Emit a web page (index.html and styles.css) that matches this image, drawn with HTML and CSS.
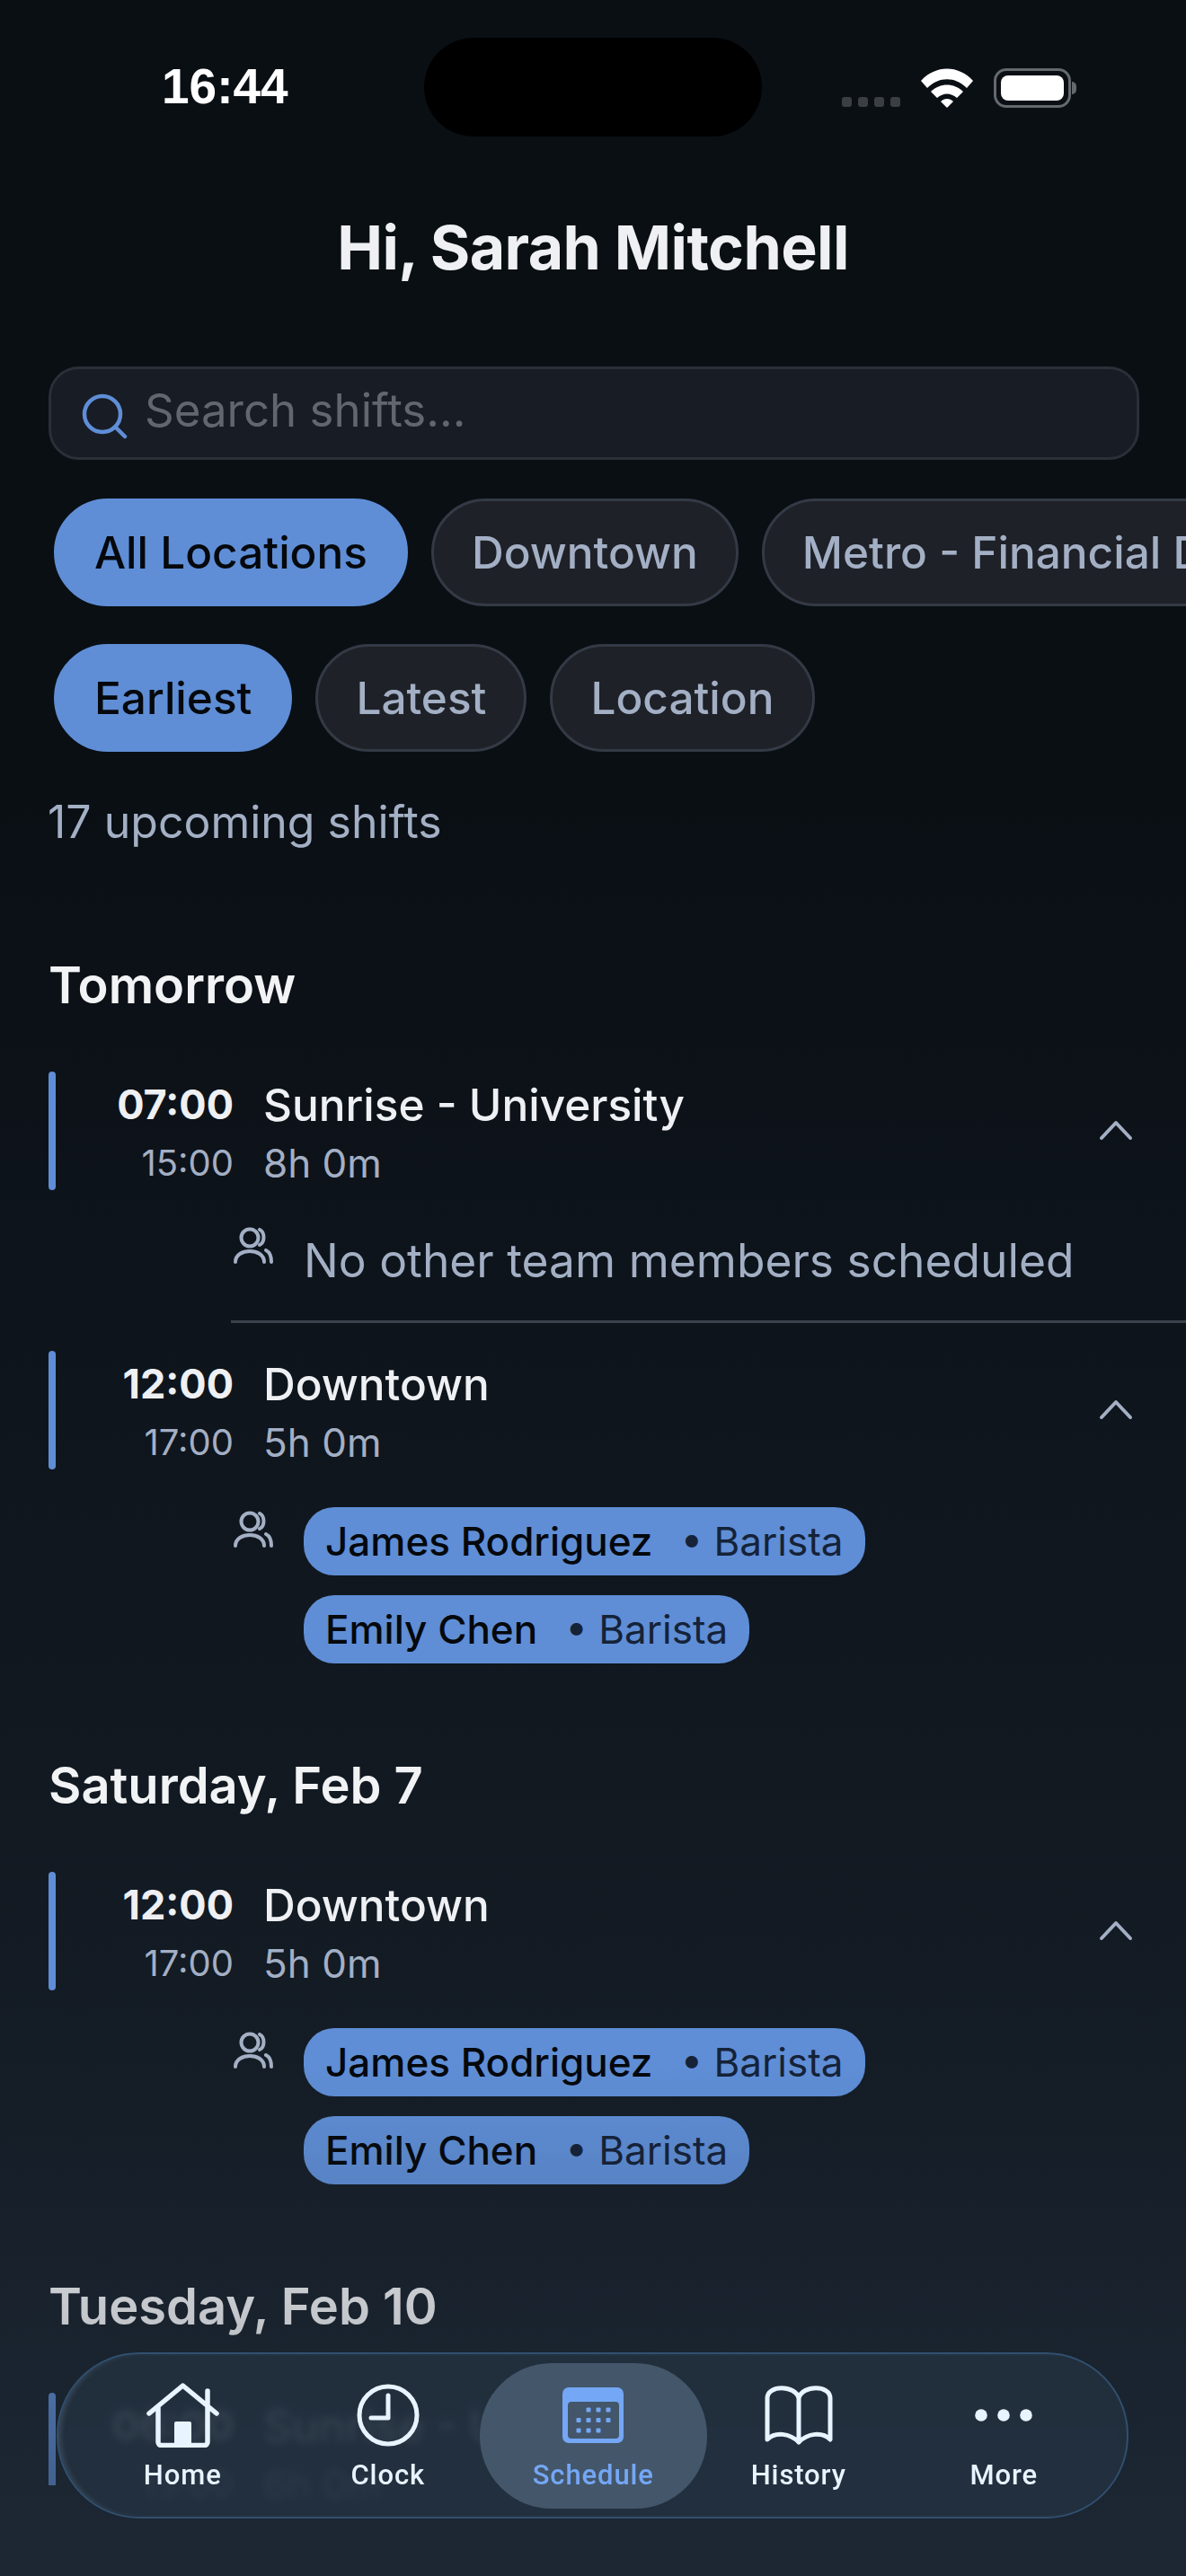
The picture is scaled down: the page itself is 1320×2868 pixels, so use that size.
FILE: index.html
```html
<!DOCTYPE html>
<html lang="en">
<head>
  <meta charset="UTF-8" />
  <meta name="viewport" content="width=device-width, initial-scale=1.0" />
  <title>Schedule</title>
  <link rel="stylesheet" href="styles.css">
</head>
<body>
  <div class="screen">
    <div class="status">
      <span class="clock">16:44</span>
      <div class="island"></div>
      <div class="status-icons">
        <div class="signal"><i></i><i></i><i></i><i></i></div>
        <svg class="wifi" width="58" height="44" viewBox="0 0 58 44">
          <path d="M0 14 C16 -4 42 -4 58 14 L51 22 C38 9 20 9 7 22 Z" fill="#fff"/>
          <path d="M11 26 C21 16 37 16 47 26 L40 33 C33 27 25 27 18 33 Z" fill="#fff"/>
          <path d="M22 37 C26 33 32 33 36 37 L29 44 Z" fill="#fff"/>
        </svg>
        <div class="battery"><div class="battery-fill"></div></div>
        <div class="battery-cap"></div>
      </div>
    </div>

    <h1 class="greeting">Hi, Sarah Mitchell</h1>

    <div class="search">
      <svg width="52" height="52" viewBox="0 0 52 52" fill="none" stroke="#5f8ed6" stroke-width="4.5" stroke-linecap="round">
        <circle cx="23" cy="24" r="20"/>
        <path d="M38 39 L48 49"/>
      </svg>
      <span>Search shifts...</span>
    </div>

    <div class="chips">
      <span class="chip chip-on">All Locations</span>
      <span class="chip">Downtown</span>
      <span class="chip">Metro - Financial District</span>
    </div>
    <div class="chips chips-sort">
      <span class="chip chip-on">Earliest</span>
      <span class="chip">Latest</span>
      <span class="chip">Location</span>
    </div>

    <p class="count">17 upcoming shifts</p>

    <h2 class="day day-first">Tomorrow</h2>

    <div class="shift">
      <div class="bar"></div>
      <div class="times"><b>07:00</b><span>15:00</span></div>
      <div class="info"><b>Sunrise - University</b><span>8h 0m</span></div>
      <svg class="chev" width="38" height="24" viewBox="0 0 38 24" fill="none" stroke="#a3afc4" stroke-width="4" stroke-linecap="round" stroke-linejoin="round"><path d="M3 21 L19 4 L35 21"/></svg>
    </div>
    <div class="team team-empty">
      <svg class="people" width="44" height="42" viewBox="0 0 44 42" fill="none" stroke="#a3afc4" stroke-width="4" stroke-linecap="round"><circle cx="18" cy="12" r="9.5"/><path d="M29 3 C35 6 35 17 29 20"/><path d="M2 39 C2 23 34 23 34 39"/><path d="M36 26 C40 28 42 33 42 39"/></svg>
      <span>No other team members scheduled</span>
    </div>
    <div class="divider"></div>

    <div class="shift">
      <div class="bar"></div>
      <div class="times"><b>12:00</b><span>17:00</span></div>
      <div class="info"><b>Downtown</b><span>5h 0m</span></div>
      <svg class="chev" width="38" height="24" viewBox="0 0 38 24" fill="none" stroke="#a3afc4" stroke-width="4" stroke-linecap="round" stroke-linejoin="round"><path d="M3 21 L19 4 L35 21"/></svg>
    </div>
    <div class="team">
      <svg class="people" width="44" height="42" viewBox="0 0 44 42" fill="none" stroke="#a3afc4" stroke-width="4" stroke-linecap="round"><circle cx="18" cy="12" r="9.5"/><path d="M29 3 C35 6 35 17 29 20"/><path d="M2 39 C2 23 34 23 34 39"/><path d="M36 26 C40 28 42 33 42 39"/></svg>
      <div class="pills">
        <div class="pill"><b>James Rodriguez</b><span>• Barista</span></div>
        <div class="pill"><b>Emily Chen</b><span>• Barista</span></div>
      </div>
    </div>

    <h2 class="day">Saturday, Feb 7</h2>

    <div class="shift">
      <div class="bar"></div>
      <div class="times"><b>12:00</b><span>17:00</span></div>
      <div class="info"><b>Downtown</b><span>5h 0m</span></div>
      <svg class="chev" width="38" height="24" viewBox="0 0 38 24" fill="none" stroke="#a3afc4" stroke-width="4" stroke-linecap="round" stroke-linejoin="round"><path d="M3 21 L19 4 L35 21"/></svg>
    </div>
    <div class="team">
      <svg class="people" width="44" height="42" viewBox="0 0 44 42" fill="none" stroke="#a3afc4" stroke-width="4" stroke-linecap="round"><circle cx="18" cy="12" r="9.5"/><path d="M29 3 C35 6 35 17 29 20"/><path d="M2 39 C2 23 34 23 34 39"/><path d="M36 26 C40 28 42 33 42 39"/></svg>
      <div class="pills">
        <div class="pill"><b>James Rodriguez</b><span>• Barista</span></div>
        <div class="pill"><b>Emily Chen</b><span>• Barista</span></div>
      </div>
    </div>

    <h2 class="day">Tuesday, Feb 10</h2>

    <div class="shift shift-cut">
      <div class="bar"></div>
      <div class="times"><b>06:00</b><span>13:00</span></div>
      <div class="info"><b>Sunrise - University</b><span>6h 0m</span></div>
    </div>

    <div class="fade"></div>

    <nav class="tabbar">
      <div class="tab">
        <div class="tab-icon">
          <svg width="81" height="72" viewBox="0 0 81 72"><path d="M3 34 L40.5 3 L78 34 M13 26 V66 A3.5 3.5 0 0 0 16.5 69.5 H64.5 A3.5 3.5 0 0 0 68 66 V9" fill="none" stroke="#e8f4ff" stroke-width="5.5" stroke-linecap="round" stroke-linejoin="round"/><rect x="31" y="43" width="19" height="27" rx="2" fill="#e8f4ff"/></svg>
        </div>
        <span>Home</span>
      </div>
      <div class="tab">
        <div class="tab-icon">
          <svg width="70" height="70" viewBox="0 0 70 70" fill="none" stroke="#e8f4ff" stroke-width="5" stroke-linecap="round" stroke-linejoin="round"><circle cx="35" cy="35" r="32"/><path d="M35 13 V38 H16"/></svg>
        </div>
        <span>Clock</span>
      </div>
      <div class="tab tab-on">
        <div class="tab-icon">
          <svg width="68" height="62" viewBox="0 0 68 62"><rect width="68" height="62" rx="7" fill="#74a7f5"/><rect x="6" y="16" width="57" height="41" rx="4" fill="#43566a"/><g fill="#74a7f5"><rect x="26.5" y="22.5" width="5" height="5" rx="1"/><rect x="37.5" y="22.5" width="5" height="5" rx="1"/><rect x="48.5" y="22.5" width="5" height="5" rx="1"/><rect x="15.5" y="34" width="5" height="5" rx="1"/><rect x="26.5" y="34" width="5" height="5" rx="1"/><rect x="37.5" y="34" width="5" height="5" rx="1"/><rect x="48.5" y="34" width="5" height="5" rx="1"/><rect x="15.5" y="45.5" width="5" height="5" rx="1"/><rect x="26.5" y="45.5" width="5" height="5" rx="1"/><rect x="37.5" y="45.5" width="5" height="5" rx="1"/></g></svg>
        </div>
        <span>Schedule</span>
      </div>
      <div class="tab">
        <div class="tab-icon">
          <svg width="76" height="66" viewBox="0 0 76 66" fill="none" stroke="#e8f4ff" stroke-width="5" stroke-linecap="round" stroke-linejoin="round"><path d="M38 14 C34 -1 3 -1 3 14 V60 C12 51 28 53 38 63 C48 53 64 51 73 60 V14 C73 -1 42 -1 38 14 V63"/></svg>
        </div>
        <span>History</span>
      </div>
      <div class="tab">
        <div class="tab-icon">
          <svg width="66" height="16" viewBox="0 0 66 16" fill="#e8f4ff"><circle cx="8" cy="8" r="6.8"/><circle cx="33" cy="8" r="6.8"/><circle cx="58" cy="8" r="6.8"/></svg>
        </div>
        <span>More</span>
      </div>
    </nav>
  </div>
</body>
</html>
```

FILE: styles.css
```css
:root {
  --blue: #5f8ed6;
  --muted: #a3afc4;
  --text: #eef0f3;
}

* {
  box-sizing: border-box;
}

html, body {
  margin: 0;
  padding: 0;
}

body {
  font-family: 'Inter', 'Liberation Sans', sans-serif;
  background: #0a0f14;
  color: var(--text);
}

.screen {
  position: relative;
  width: 1320px;
  height: 2868px;
  overflow: hidden;
  padding: 42px 0 0 54px;
  background: linear-gradient(180deg, #0a0f14 0%, #0a0f14 30%, #10171f 62%, #141c25 80%, #1c2733 100%);
}

/* status bar */
.status {
  position: relative;
  height: 110px;
  margin-left: -54px;
}

.clock {
  position: absolute;
  left: 180px;
  top: 24px;
  font-family: 'Liberation Sans', sans-serif;
  font-size: 55px;
  line-height: 60px;
  font-weight: 700;
  color: #fff;
}

.island {
  position: absolute;
  left: 472px;
  top: 0;
  width: 376px;
  height: 110px;
  border-radius: 55px;
  background: #000;
}

.status-icons {
  position: absolute;
  left: 937px;
  top: 34px;
  display: flex;
  align-items: flex-end;
}

.signal {
  display: flex;
  gap: 7px;
  margin-right: 23px;
  margin-bottom: 1px;
}

.signal i {
  width: 11px;
  height: 11px;
  border-radius: 3px;
  background: #3b3f44;
}

.wifi {
  margin-right: 23px;
}

.battery {
  width: 86px;
  height: 44px;
  padding: 5px;
  border: 3px solid #65696d;
  border-radius: 14px;
}

.battery-fill {
  width: 100%;
  height: 100%;
  border-radius: 8px;
  background: #fff;
}

.battery-cap {
  width: 5px;
  height: 14px;
  margin: 0 0 15px 1px;
  border-radius: 0 5px 5px 0;
  background: #65696d;
}

.greeting {
  margin: 84px 0 0 -54px;
  text-align: center;
  font-size: 68px;
  line-height: 78px;
  font-weight: 700;
  letter-spacing: -0.6px;
}

/* search */
.search {
  display: flex;
  align-items: center;
  gap: 20px;
  width: 1214px;
  height: 104px;
  margin-top: 94px;
  padding: 0 0 0 34px;
  border: 3px solid #2a2f38;
  border-radius: 34px;
  background: #181c24;
  font-size: 51px;
  color: #62666f;
}

.search svg {
  margin-top: 6px;
  flex: none;
}

.search span {
  margin-top: -8px;
  margin-left: -2px;
}

/* filter chips */
.chips {
  display: flex;
  gap: 26px;
  margin: 43px 0 0 6px;
  white-space: nowrap;
}

.chips-sort {
  margin-top: 42px;
}

.chip {
  display: flex;
  align-items: center;
  height: 120px;
  padding: 0 42px;
  border: 3px solid #343a45;
  border-radius: 60px;
  background: #1e2127;
  font-size: 49.5px;
  font-weight: 500;
  color: var(--muted);
}

.chip-on {
  border-color: var(--blue);
  background: var(--blue);
  color: #05080c;
}

.count {
  margin: 48px 0 0 -1px;
  font-size: 50px;
  line-height: 60px;
  color: var(--muted);
}

.day {
  margin: 104px 0 0;
  font-size: 56px;
  line-height: 64px;
  font-weight: 600;
  color: #f2f3f5;
}

.day-first {
  margin-top: 120px;
}

/* shift row */
.shift {
  position: relative;
  display: flex;
  height: 132px;
  margin-top: 64px;
}

.bar {
  flex: none;
  width: 8px;
  border-radius: 4px;
  background: var(--blue);
}

.shift-cut .bar {
  height: 103px;
  border-radius: 4px 4px 0 0;
}

.times {
  flex: none;
  width: 198px;
  display: flex;
  flex-direction: column;
  align-items: flex-end;
}

.info {
  display: flex;
  flex-direction: column;
  margin-left: 33px;
}

.times b, .info b {
  line-height: 72px;
  margin-top: 1px;
  color: var(--text);
}

.times b {
  font-size: 45px;
  font-weight: 700;
}

.info b {
  font-size: 49.5px;
  font-weight: 500;
}

.times span, .info span {
  line-height: 60px;
  margin-top: -1px;
  color: var(--muted);
}

.times span {
  font-size: 40px;
}

.info span {
  font-size: 44px;
}

.chev {
  position: absolute;
  left: 1169px;
  top: 53px;
}

/* team rows */
.team {
  display: flex;
  margin: 42px 0 0 206px;
}

.people {
  flex: none;
  margin-right: 34px;
  margin-top: 4px;
}

.team-empty {
  margin-top: 37px;
  align-items: flex-start;
  font-size: 51.5px;
  line-height: 64px;
  color: var(--muted);
}

.team-empty span {
  margin-top: 9px;
}

.divider {
  height: 3px;
  margin: 35px 0 0 203px;
  background: #3c424c;
}

.divider + .shift {
  margin-top: 31px;
}

.pills {
  display: flex;
  flex-direction: column;
  align-items: flex-start;
  gap: 22px;
}

.pill {
  display: flex;
  align-items: center;
  gap: 31px;
  height: 76px;
  padding: 0 24px;
  border-radius: 34px;
  background: var(--blue);
  font-size: 44px;
  color: #05080c;
}

.pill b {
  font-weight: 500;
}

.pill span {
  color: #152238;
}

/* dims the list before it goes under the tab bar */
.fade {
  position: absolute;
  left: 0;
  right: 0;
  bottom: 0;
  height: 570px;
  pointer-events: none;
  background: linear-gradient(180deg, rgba(28, 39, 51, 0) 0%, rgba(28, 39, 51, 0.22) 50%, rgba(28, 39, 51, 0.55) 100%);
}

/* floating tab bar */
.tabbar {
  position: absolute;
  left: 63px;
  top: 2619px;
  display: flex;
  align-items: center;
  width: 1193px;
  height: 185px;
  padding-left: 24px;
  border: 2px solid #31506f;
  border-radius: 92px;
  background: rgba(35, 49, 64, 0.86);
  box-shadow: inset 5px 0 6px -3px rgba(170, 190, 210, 0.22);
  -webkit-backdrop-filter: blur(5px);
  backdrop-filter: blur(5px);
}

.tab {
  flex: none;
  display: flex;
  flex-direction: column;
  align-items: center;
  justify-content: center;
  width: 228.5px;
  height: 162px;
  padding-top: 4px;
  font-family: 'Roboto', 'Inter', sans-serif;
  font-size: 31px;
  line-height: 40px;
  font-weight: 500;
  letter-spacing: 0.9px;
  color: #e8f4ff;
}

.tab-icon {
  display: flex;
  align-items: center;
  justify-content: center;
  height: 74px;
  margin-bottom: 10px;
}

.tab-on {
  width: 253px;
  margin: 0 -12.25px;
  border-radius: 80px;
  background: #44566a;
  color: #74a7f5;
}
```
